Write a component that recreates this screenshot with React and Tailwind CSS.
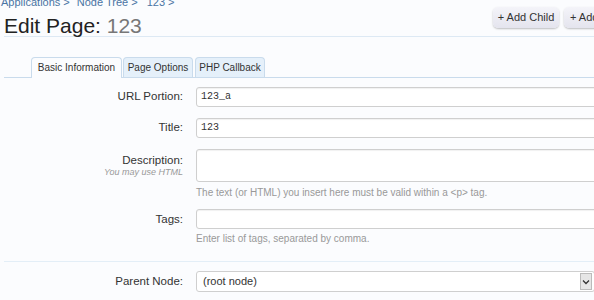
export default function App() {
  const input =
    "h-[20px] w-[420px] shrink-0 rounded-[3px] border border-[#cfcfcf] bg-white shadow-[inset_0_1px_1px_rgba(0,0,0,0.06)]";
  const label = "w-[183px] shrink-0 text-right text-[11.5px] text-[#333]";
  return (
    <div className="w-[594px] h-[300px] overflow-hidden bg-[#fbfcfe] font-['Liberation_Sans',sans-serif] text-[#333]">
      {/* breadcrumb */}
      <div className="h-[9px]">
        <div className="-mt-[5px] flex text-[11px] leading-[14px] text-[#4a74a3]">
          <span className="pl-[1px]">Applications &gt;</span>
          <span className="pl-[7px]">Node Tree &gt;</span>
          <span className="pl-[9px]">123 &gt;</span>
        </div>
      </div>
      {/* header */}
      <div className="ml-[4px] flex h-[33px] items-start border-b border-[#dde9f4]">
        <h1 className="mt-[11px] text-[21px] leading-[22px] text-[#222] whitespace-nowrap">
          Edit Page: <span className="text-[#777]">123</span>
        </h1>
        <div className="ml-auto -mr-[40px] mt-[3px] flex shrink-0 gap-[5px]">
          <div className="h-[21px] w-[66px] rounded-[5px] bg-gradient-to-b from-[#f4f4f9] to-[#e4e4ee] text-[11px] leading-[21px] text-center text-[#333] shadow-[0_1px_2px_rgba(0,0,0,0.25)]">
            + Add Child
          </div>
          <div className="h-[21px] w-[70px] rounded-[5px] bg-gradient-to-b from-[#f4f4f9] to-[#e4e4ee] pl-[6px] text-[11px] leading-[21px] text-[#333] shadow-[0_1px_2px_rgba(0,0,0,0.25)]">
            + Add
          </div>
        </div>
      </div>
      {/* tabs */}
      <div className="ml-[4px] mt-[21px] flex h-[20px] items-end border-b border-[#c9dbec] pl-[27px]">
        <div className="-mb-[1px] h-[21px] w-[91px] rounded-t-[4px] border border-b-0 border-[#c9dbec] bg-[#fbfcfe] text-center text-[10px] leading-[20px] text-[#333]">
          Basic Information
        </div>
        <div className="ml-[1px] h-[20px] w-[70px] rounded-t-[4px] border border-b-0 border-[#c9dbec] bg-[#e5f0fa] text-center text-[10px] leading-[20px] text-[#333]">
          Page Options
        </div>
        <div className="ml-[2px] h-[20px] w-[70px] rounded-t-[4px] border border-b-0 border-[#c9dbec] bg-[#e5f0fa] text-center text-[10px] leading-[20px] text-[#333]">
          PHP Callback
        </div>
      </div>
      {/* form */}
      <div className="mt-[9px]">
        <div className="flex h-[20px] items-center">
          <div className={label}>URL Portion:</div>
          <div className={"ml-[13px] pl-[4px] font-['Liberation_Mono',monospace] text-[10px] leading-[18px] text-[#333] " + input}>
            123_a
          </div>
        </div>
        <div className="mt-[11px] flex h-[20px] items-center">
          <div className={label}>Title:</div>
          <div className={"ml-[13px] pl-[4px] font-['Liberation_Mono',monospace] text-[10px] leading-[18px] text-[#333] " + input}>
            123
          </div>
        </div>
        <div className="mt-[11px] flex">
          <div className="w-[183px] shrink-0 pt-[4px] text-right">
            <div className="text-[11.5px] leading-[14px] text-[#333]">Description:</div>
            <div className="text-[9px] italic leading-[11px] text-[#999]">You may use HTML</div>
          </div>
          <div className="ml-[13px] shrink-0">
            <div className="h-[33px] w-[420px] rounded-[3px] border border-[#cfcfcf] bg-white shadow-[inset_0_1px_1px_rgba(0,0,0,0.06)]"></div>
            <div className="mt-[5px] h-[12px] text-[10px] leading-[12px] text-[#999]">
              The text (or HTML) you insert here must be valid within a &lt;p&gt; tag.
            </div>
          </div>
        </div>
        <div className="mt-[10px] flex">
          <div className="w-[183px] shrink-0 pt-[3px] text-right text-[11.5px] leading-[14px] text-[#333]">Tags:</div>
          <div className="ml-[13px] shrink-0">
            <div className={input}></div>
            <div className="mt-[4px] h-[12px] text-[10px] leading-[12px] text-[#999]">
              Enter list of tags, separated by comma.
            </div>
          </div>
        </div>
        <div className="ml-[4px] mt-[16px] border-t border-[#e3eef7]"></div>
        <div className="mt-[9px] flex h-[21px] items-center">
          <div className={label}>Parent Node:</div>
          <div className="ml-[13px] flex h-[21px] w-[399px] shrink-0 items-center rounded-[3px] border border-[#cfcfcf] bg-white pl-[6px] text-[11px] text-[#333]">
            <span className="flex-1">(root node)</span>
            <div className="mr-[2px] flex h-[17px] w-[12px] items-center justify-center border border-[#bbb] bg-[#e6e6e6]">
              <svg width="8" height="6" viewBox="0 0 8 6"><path d="M1 1.5 L4 4.5 L7 1.5" fill="none" stroke="#333" strokeWidth="1.3" /></svg>
            </div>
          </div>
        </div>
      </div>
    </div>
  );
}
